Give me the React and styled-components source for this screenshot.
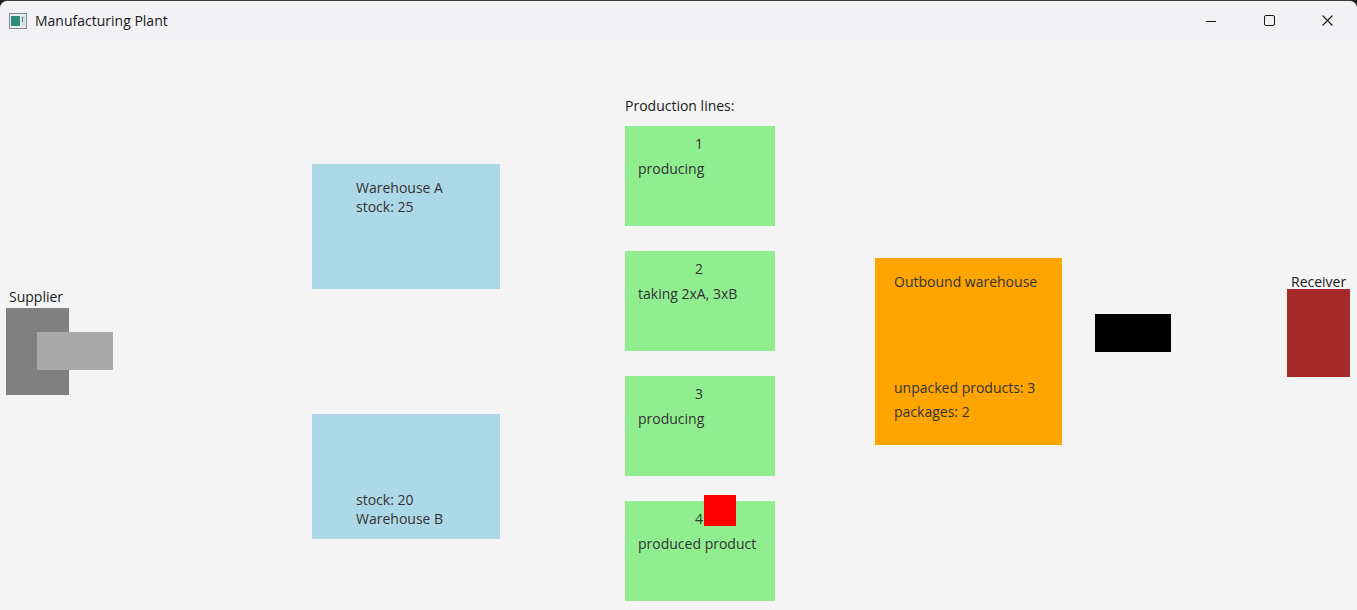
import React from "react";
import styled, { createGlobalStyle } from "styled-components";

const Global = createGlobalStyle`
  html, body {
    margin: 0;
    padding: 0;
    background: #1f1f1f;
    overflow: hidden;
  }
  * { box-sizing: border-box; }
`;

const lines = [
  { id: 1, status: "producing" },
  { id: 2, status: "taking 2xA, 3xB" },
  { id: 3, status: "producing" },
  { id: 4, status: "produced product" },
];

export default function App() {
  return (
    <Window>
      <Global />
      <TitleBar>
        <AppIcon>
          <svg width="18" height="16" viewBox="0 0 18 16">
            <rect x="0.5" y="0.5" width="17" height="15" fill="#e8eef0" stroke="#7a8a90" />
            <rect x="2" y="3" width="9" height="10" fill="#2f8a7a" />
            <rect x="12" y="3" width="4" height="10" fill="#cfdde2" />
            <rect x="13" y="4" width="1" height="5" fill="#4a7da8" />
          </svg>
        </AppIcon>
        <Title>Manufacturing Plant</Title>
        <Controls>
          <CtrlButton>
            <svg width="10" height="10" viewBox="0 0 10 10">
              <path d="M0 5.5h10" stroke="#1a1a1a" strokeWidth="1" />
            </svg>
          </CtrlButton>
          <CtrlButton>
            <svg width="11" height="11" viewBox="0 0 11 11">
              <rect x="0.5" y="0.5" width="10" height="10" rx="1.5" fill="none" stroke="#1a1a1a" strokeWidth="1" />
            </svg>
          </CtrlButton>
          <CtrlButton>
            <svg width="11" height="11" viewBox="0 0 11 11">
              <path d="M0.5 0.5l10 10M10.5 0.5l-10 10" stroke="#1a1a1a" strokeWidth="1.1" />
            </svg>
          </CtrlButton>
        </Controls>
      </TitleBar>

      <Canvas>
        <Label style={{ left: 9, top: 248 }}>Supplier</Label>
        <Block $bg="#808080" style={{ left: 6, top: 268, width: 63, height: 87 }} />
        <Block $bg="#a9a9a9" style={{ left: 37, top: 292, width: 76, height: 38 }} />

        <Warehouse style={{ top: 124 }}>
          <WarehouseText>
            <div>Warehouse A</div>
            <div>stock: 25</div>
          </WarehouseText>
        </Warehouse>
        <Warehouse $bottom style={{ top: 374 }}>
          <WarehouseText>
            <div>stock: 20</div>
            <div>Warehouse B</div>
          </WarehouseText>
        </Warehouse>

        <Label style={{ left: 625, top: 57 }}>Production lines:</Label>
        {lines.map((l, i) => (
          <Line key={l.id} style={{ top: 86 + i * 125 }}>
            <LineNum>{l.id}</LineNum>
            <LineStatus>{l.status}</LineStatus>
          </Line>
        ))}
        <Block $bg="#ff0000" style={{ left: 704, top: 455, width: 32, height: 31 }} />

        <Outbound>
          <div>Outbound warehouse</div>
          <OutboundStats>
            <div>unpacked products: 3</div>
            <div>packages: 2</div>
          </OutboundStats>
        </Outbound>

        <Block $bg="#000000" style={{ left: 1095, top: 274, width: 76, height: 38 }} />

        <Label style={{ left: 1291, top: 233 }}>Receiver</Label>
        <Block $bg="#a52a2a" style={{ left: 1287, top: 249, width: 63, height: 88 }} />
      </Canvas>
    </Window>
  );
}

const Window = styled.div`
  width: 1357px;
  height: 610px;
  background: #f4f4f4;
  border-radius: 8px 8px 0 0;
  border-top: 1px solid #3a3a3a;
  overflow: hidden;
  display: flex;
  flex-direction: column;
  font-family: "Open Sans", "Noto Sans", sans-serif;
`;

const TitleBar = styled.div`
  height: 39px;
  flex: none;
  display: flex;
  align-items: center;
  background: #f2f2f5;
  padding-left: 9px;
`;

const AppIcon = styled.div`
  width: 18px;
  height: 16px;
  display: flex;
`;

const Title = styled.div`
  margin-left: 8px;
  font-family: "Open Sans", sans-serif;
  font-size: 14px;
  color: #1a1a1a;
  flex: 1;
`;

const Controls = styled.div`
  display: flex;
  height: 100%;
`;

const CtrlButton = styled.div`
  width: 58px;
  height: 100%;
  display: flex;
  align-items: center;
  justify-content: center;
  &:last-child {
    width: 59px;
  }
`;

const Canvas = styled.div`
  position: relative;
  flex: 1;
  color: #333333;
  font-size: 14px;
`;

const Label = styled.div`
  position: absolute;
  line-height: 18px;
  color: #1a1a1a;
  white-space: nowrap;
`;

const Block = styled.div`
  position: absolute;
  background: ${(p) => p.$bg};
`;

const Warehouse = styled.div`
  position: absolute;
  left: 312px;
  width: 188px;
  height: 125px;
  background: #add8e6;
  display: flex;
  flex-direction: column;
  justify-content: ${(p) => (p.$bottom ? "flex-end" : "flex-start")};
  padding: ${(p) => (p.$bottom ? "0 0 11px 44px" : "14px 0 0 44px")};
`;

const WarehouseText = styled.div`
  line-height: 19px;
`;

const Line = styled.div`
  position: absolute;
  left: 625px;
  width: 150px;
  height: 100px;
  background: #90ee90;
  padding: 9px 13px 0;
`;

const LineNum = styled.div`
  text-align: center;
  line-height: 18px;
  padding-right: 2px;
`;

const LineStatus = styled.div`
  margin-top: 7px;
  line-height: 18px;
  white-space: nowrap;
`;

const Outbound = styled.div`
  position: absolute;
  left: 875px;
  top: 218px;
  width: 187px;
  height: 187px;
  background: #ffa500;
  padding: 14px 19px 0;
  line-height: 19px;
  display: flex;
  flex-direction: column;
`;

const OutboundStats = styled.div`
  margin-top: 85px;
  line-height: 24px;
`;
